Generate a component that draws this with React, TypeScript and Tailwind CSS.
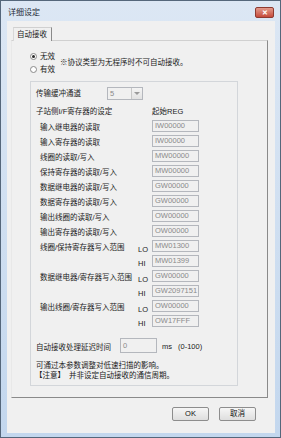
import React from 'react';

const items = [
  ['输入继电器的读取', 'IW00000'],
  ['输入寄存器的读取', 'IW00000'],
  ['线圈的读取/写入', 'MW00000'],
  ['保持寄存器的读取/写入', 'MW00000'],
  ['数据继电器的读取/写入', 'GW00000'],
  ['数据寄存器的读取/写入', 'GW00000'],
  ['输出线圈的读取/写入', 'OW00000'],
  ['输出寄存器的读取/写入', 'OW00000'],
];

const ranges = [
  ['线圈/保持寄存器写入范围', 'MW01300', 'MW01399'],
  ['数据继电器/寄存器写入范围', 'GW00000', 'GW2097151'],
  ['输出线圈/寄存器写入范围', 'OW00000', 'OW17FFF'],
];

function Field({ value }: { value: string }) {
  return (
    <div className="flex h-[12px] w-[47px] shrink-0 items-center border border-[#b4b7bd] bg-[#f0f0f0] pl-[2px] text-[7.5px] leading-none text-[#8a8a8a]">
      {value}
    </div>
  );
}

function Radio({ checked, label }: { checked?: boolean; label: string }) {
  return (
    <div className="flex h-[13px] items-center">
      <span className="flex h-[7px] w-[7px] items-center justify-center rounded-full border border-[#8a8a8a] bg-white">
        {checked && <span className="h-[3px] w-[3px] rounded-full bg-[#2a2a2a]" />}
      </span>
      <span className="ml-[3px]">{label}</span>
    </div>
  );
}

function Button({ children }: { children: React.ReactNode }) {
  return (
    <button className="flex h-[14px] w-[37px] items-center justify-center rounded-[2px] border border-[#8d8d8d] bg-gradient-to-b from-[#f6f6f6] to-[#dedede] text-[7.5px] leading-none text-[#111]">
      {children}
    </button>
  );
}

export default function App() {
  return (
    <div className="flex h-[438px] w-[281px] flex-col whitespace-nowrap border border-[#55677b] bg-gradient-to-b from-[#dce7f4] to-[#c3d7ee] font-['Liberation_Sans','Noto_Sans_CJK_SC',sans-serif] text-[7.5px] text-[#1b1b1b]">
      {/* title bar */}
      <div className="flex h-[20px] items-start justify-between">
        <span className="ml-[7px] mt-[6px] text-[8px] leading-[12px] text-[#1e2a36]">详细设定</span>
        <div className="mr-[6px] mt-[6px] flex h-[11px] w-[19px] items-center justify-center rounded-[2px] border border-[#8e3a30] bg-gradient-to-b from-[#e29a8c] to-[#c5493a] text-[7px] font-bold leading-none text-white">
          ✕
        </div>
      </div>

      {/* client area */}
      <div className="ml-[6px] mr-[5px] flex h-[412px] flex-col bg-[#f0f0f0] pl-[4px]">
        <div className="mt-[6px] flex pl-[2px]">
          <div className="relative z-10 -mb-px flex h-[14px] w-[39px] items-center border-l border-r border-t border-l-[#d8d8d8] border-r-[#8a8a8a] border-t-[#d0d0d0] bg-[#f0f0f0] pl-[3px] leading-none">
            自动接收
          </div>
        </div>

        <div className="flex h-[358px] w-[257px] flex-col border border-b-[#8a8a8a] border-l-[#e8e8e8] border-r-[#8a8a8a] border-t-[#d0d0d0] pl-[18px] pt-[9px]">
          <div className="flex items-center">
            <div className="w-[30px]">
              <Radio checked label="无效" />
              <Radio label="有效" />
            </div>
            <span className="mt-[-1px]">※协议类型为无程序时不可自动接收。</span>
          </div>

          <div className="mt-[5px] flex h-[305px] w-[208px] flex-col border border-[#d3d6da]">
            <div className="ml-[5px] mt-[5px] flex h-[13px] items-center">
              <span className="w-[71px]">传输缓冲通道</span>
              <div className="flex h-[13px] w-[36px] items-center border border-[#b4b7bd] bg-[#f0f0f0]">
                <span className="flex-1 pl-[2px] text-[#8a8a8a]">5</span>
                <span className="flex h-full w-[11px] items-center justify-center border-l border-[#c8c8c8] bg-gradient-to-b from-[#f4f4f4] to-[#e2e2e2]">
                  <span className="h-0 w-0 border-x-[3px] border-t-[3px] border-x-transparent border-t-[#9a9a9a]" />
                </span>
              </div>
            </div>

            <div className="ml-[5px] mt-[5px] flex h-[13px] items-center">
              <span className="w-[116px]">子站侧I/F寄存器的设定</span>
              <span>起始REG</span>
            </div>

            <div className="mt-[2px] flex flex-col">
              {items.map(([label, value]) => (
                <div key={label + value} className="ml-[9px] flex h-[15px] items-start">
                  <span className="w-[112px] leading-[16px]">{label}</span>
                  <Field value={value} />
                </div>
              ))}
              {ranges.map(([label, lo, hi]) => (
                <div key={label} className="flex flex-col">
                  <div className="ml-[9px] flex h-[15px] items-start">
                    <span className="w-[98px] overflow-visible leading-[15px]">{label}</span>
                    <span className="w-[14px] pt-[2px] leading-[15px]">LO</span>
                    <Field value={lo} />
                  </div>
                  <div className="ml-[9px] flex h-[15px] items-start">
                    <span className="w-[98px]" />
                    <span className="w-[14px] pt-[1px] leading-[15px]">HI</span>
                    <Field value={hi} />
                  </div>
                </div>
              ))}
            </div>

            <div className="ml-[5px] mt-[8px] flex h-[15px] items-center">
              <span className="mt-[4px] w-[84px]">自动接收处理延迟时间</span>
              <div className="flex h-[15px] w-[37px] items-start border border-[#b4b7bd] bg-[#f0f0f0] pl-[2px] pt-[1px] text-[#8a8a8a]">
                0
              </div>
              <span className="ml-[5px] mt-[2px]">ms</span>
              <span className="ml-[6px] mt-[2px]">(0-100)</span>
            </div>

            <div className="ml-[5px] mt-[8px] leading-[10px]">可通过本参数调整对低速扫描的影响。</div>
            <div className="ml-[4px] flex leading-[10px]">
              <span className="w-[34px]">【注意】</span>
              <span>并非设定自动接收的通信周期。</span>
            </div>
          </div>
        </div>

        <div className="mt-[9px] flex justify-end gap-[10px] pr-[19px]">
          <Button>OK</Button>
          <Button>取消</Button>
        </div>
      </div>
    </div>
  );
}
